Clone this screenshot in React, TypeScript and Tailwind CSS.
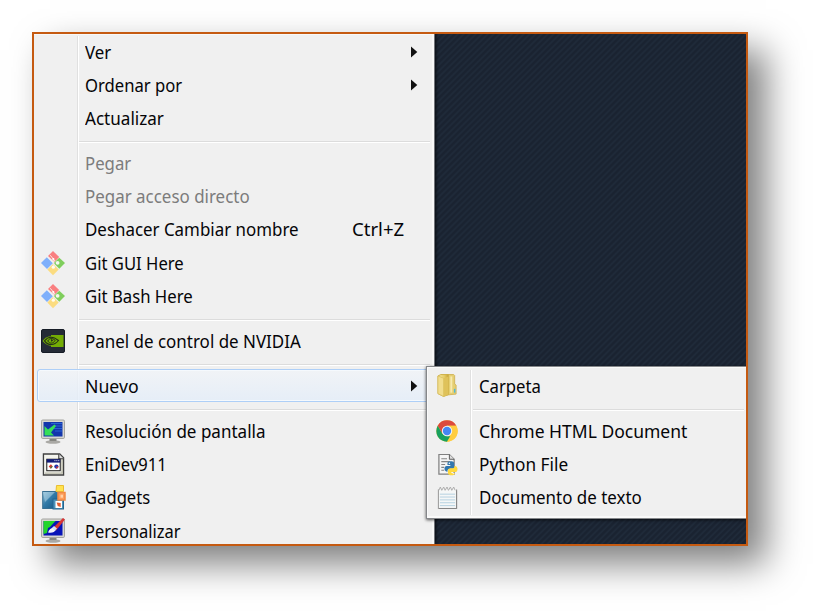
import React, { useLayoutEffect, useRef, useState } from 'react';

function Label({ text, width, dim }: { text: string; width: number; dim?: boolean }) {
  const ref = useRef<HTMLSpanElement>(null);
  const [scale, setScale] = useState(1);
  useLayoutEffect(() => {
    if (ref.current) setScale(width / ref.current.offsetWidth);
  }, [width]);
  return (
    <span
      ref={ref}
      className={`inline-block origin-left whitespace-nowrap ${dim ? 'text-[#7c7c7c]' : 'text-[#050508]'}`}
      style={{ transform: `scaleX(${scale})` }}
    >
      {text}
    </span>
  );
}

function GitIcon() {
  return (
    <svg width="26" height="26" viewBox="0 0 26 26">
      <path d="m8 6 5-5 6.200 6-4.700 5Z" fill="#f97f80" />
      <path d="m6.800 7.300 6 6L7 19 1 13Z" fill="#7fb0fb" />
      <path d="m19.300 7.700 5.700 5.300-5.700 5.700-5.700-5.700Z" fill="#7fce5c" />
      <path d="m13 14 5.700 5.600L13 25.300l-5.700-5.700Z" fill="#fbdc80" />
      <path d="m10.200 5.200 5 6M13.800 10v7" stroke="#f8e6e2" strokeWidth="1" fill="none" />
      <circle cx="17.600" cy="12.800" r="1.900" fill="#f3f7ef" />
      <circle cx="13.300" cy="9" r="1.100" fill="#fff" />
      <circle cx="13.300" cy="17.200" r="1.600" fill="#fffdf0" />
    </svg>
  );
}

function NvidiaIcon() {
  return (
    <svg width="24" height="24" viewBox="0 0 24 24">
      <rect x=".5" y=".5" width="23" height="23" rx="1.500" fill="#252b36" stroke="#161c26" />
      <path d="M10 6h12.500v12H10Z" fill="#74ad05" />
      <path d="M1.500 12C5 6.500 13 5 20 11.500 15 19 6 18 1.500 12Z" fill="#74ad05" />
      <path d="M3.500 11.800c3.500-4.300 8.500-4.700 14-.3-4.500 5.500-10.500 5-14 .3Z" fill="none" stroke="#243017" strokeWidth="1.100" />
      <path d="M6.700 12c1.700-3 4.800-3.200 7.500-.6-2.200 3.500-5.500 3.500-7.500.6Z" fill="none" stroke="#243017" strokeWidth="1" />
      <path d="M10 10v2.700l2.300-1.200Z" fill="#243017" />
    </svg>
  );
}

function ScreenIcon({ brush }: { brush?: boolean }) {
  return (
    <svg width="24" height="25" viewBox="0 0 24 25" className="overflow-visible">
      <ellipse cx="12" cy="23" rx="7.500" ry="1.800" fill="#aaa9a5" />
      <path d="M8.500 19h7v3h-7Z" fill="#858580" />
      <rect x=".5" y="1" width="23" height="18.500" rx="1.300" fill="#d6d6d1" stroke="#a5a5a1" />
      <rect x="2.500" y="3" width="19" height="14.500" fill={brush ? '#0713b8' : '#1336ac'} />
      {brush ? (
        <>
          <path d="M2.500 3h12L9 9l-2 1-1 5-3.500 1Z" fill="#22d52c" />
          <path d="M7 14.500c1-3 3-4.700 6-5.300l2.500 1.500c-2 4-5 4.500-8.500 3.800Z" fill="#f4f4fc" />
          <path d="m12 10 10-10 2 1.500-9 11Z" fill="#d73535" />
          <path d="m11 10 2-2 3 2.500-2 2Z" fill="#d2e1ff" />
        </>
      ) : (
        <>
          <path d="M10 4.500h11M12 7h9M12 9.500h9M14 12h7" stroke="#2963d2" strokeWidth="1" />
          <path d="M3.500 7v9.500H13l-3-3 5-6.500-1.500-1.500L7 10.500Z" fill="#35df58" />
        </>
      )}
    </svg>
  );
}

function AppIcon() {
  return (
    <svg width="23" height="25" viewBox="0 0 24 25">
      <path d="M1.500 1.500h17l4 4v18h-21Z" fill="#f4f4ee" stroke="#404040" strokeWidth="1.400" />
      <path d="M3 21.500h18V6" fill="none" stroke="#b8b8a8" strokeWidth="1.500" />
      <path d="M17.500 1.500v5h5" fill="#dedede" stroke="#444" strokeWidth="1.200" />
      <rect x="5" y="7" width="14" height="12" fill="#fff" stroke="#101010" />
      <path d="M5 7h14v3.500H5Z" fill="#101a78" />
      <path d="M13 8.500h1m1 0h1m1 0h1" stroke="#fff" />
      <path d="m7 14.700 2.300-2.400 2 2.400-2 2.300Z" fill="#db3932" />
      <path d="M9 14.700h2.300L9 17Z" fill="#188c47" />
      <circle cx="15" cy="14.700" r="2.200" fill="#2436ad" />
      <path d="M15 14.700h2.200a2.200 2.200 0 0 1-2.200 2.200Z" fill="#dc3434" />
    </svg>
  );
}

function GadgetsIcon() {
  return (
    <svg width="25" height="25" viewBox="0 0 25 25">
      <defs>
        <linearGradient id="gadget" x1="0" y1="0" x2="1" y2="1">
          <stop stopColor="#9cc6dc" /><stop offset=".45" stopColor="#337ba8" /><stop offset="1" stopColor="#14547f" />
        </linearGradient>
      </defs>
      <rect x="1.700" y="6.500" width="15" height="17" fill="url(#gadget)" stroke="#386f92" />
      <path d="M2 7h12L4 17Z" fill="#b3d6e5" opacity=".55" />
      <rect x="12" y="14" width="10.500" height="10" fill="#4d93ba" stroke="#25658f" />
      <rect x="14.500" y="16" width="6.500" height="7" fill="#fff" />
      <path d="m15.700 17.500 4 .5v4l-3-1Z" fill="#e25d31" />
      <path d="M15.500 .5h7v6h-7.500Z" fill="#ffe34f" stroke="#e9bd31" />
      <rect x="17" y="7.500" width="7" height="7.500" fill="#ff9e5c" stroke="#f18a46" strokeWidth="1.500" />
      <rect x="19.500" y="9.700" width="2.500" height="3" fill="#ffd2a7" />
    </svg>
  );
}

function FolderIcon() {
  return (
    <svg width="21" height="25" viewBox="0 0 22 25">
      <defs>
        <linearGradient id="folder"><stop stopColor="#f5e7a1" /><stop offset=".6" stopColor="#e6cd68" /><stop offset="1" stopColor="#c7a438" /></linearGradient>
      </defs>
      <path d="M10 1h7.500l1 1v9l1.500 1v9.500l-10 1Z" fill="#e5cf72" stroke="#d2b65b" />
      <path d="M1 2.500 4 1h8v21l-5 2-6-3Z" fill="url(#folder)" stroke="#cfb047" />
      <path d="M1 2.500 7 5v19l-6-3Z" fill="#f1dd8d" stroke="#d6bd5b" strokeWidth=".7" />
      <path d="M7 5 12 3v19l-5 2Z" fill="#dfc25a" />
      <path d="M15 3v17" stroke="#f7eab0" strokeWidth="2" />
      <path d="M18.500 16v4" stroke="#4eb8d9" strokeWidth="1.500" />
    </svg>
  );
}

function ChromeIcon() {
  return (
    <svg width="22" height="22" viewBox="0 0 22 22">
      <circle cx="11" cy="11" r="10.700" fill="#ffcd40" />
      <path d="M1.700 5.700A10.700 10.700 0 0 1 20.300 5.700H11L6.400 13.700Z" fill="#dc4a3e" />
      <path d="M1.700 5.700 6.400 13.700 11 16.300h4.600L11 21.700A10.700 10.700 0 0 1 1.700 5.700Z" fill="#18a15f" />
      <path d="m15.600 13.700-4.600 8A10.700 10.700 0 0 0 20.300 5.700H11Z" fill="#ffcd40" />
      <circle cx="11" cy="11" r="5.200" fill="#f5f5f5" />
      <circle cx="11" cy="11" r="4.200" fill="#4587f3" />
    </svg>
  );
}

function PythonIcon() {
  return (
    <svg width="20" height="23" viewBox="0 0 21 24" className="overflow-visible">
      <path d="M2 1.500h11l5 5v15.500H2Z" fill="#f5f5f5" stroke="#808080" strokeWidth="1.300" />
      <path d="M13 1.500v5h5" fill="#ddd" stroke="#555" />
      <path d="M4.500 6h6M4.500 9h9M4.500 12h4M4.500 15h3M4.500 18h3" stroke="#858585" strokeWidth="1.200" />
      <path d="M11 10.500c0-2.500 7-2.500 7 0v4c0 2-1.500 2-4 2s-3 1-3 3c-4 0-4-6-1-6h4v-1h-3Z" fill="#3277ae" />
      <path d="M18.500 13.500c4-.3 4 6.500.5 6.500h-4v.8h4c0 3.200-7.500 3.200-7.500 0v-2.500c0-2 1.500-2.300 4-2.300s3-.7 3-2.500Z" fill="#ffd93e" />
      <circle cx="13" cy="10.700" r=".8" fill="#fff" />
      <circle cx="17" cy="21.500" r=".7" fill="#fff" />
    </svg>
  );
}

function NotepadIcon() {
  return (
    <svg width="21" height="25" viewBox="0 0 22 25">
      <path d="M1.500 3h19v21h-19Z" fill="#f5f7f7" stroke="#a2a2a2" strokeWidth="1.200" />
      <path d="M3 9h16M3 12h16M3 15h16M3 18h16M3 21h16" stroke="#b2d0df" />
      <path d="M0 0h22v4H0Z" fill="#f0f0f0" />
      <path d="m2 5 1.500-3.500L5 5l2-3.500L8.500 5l2-3.500L12 5l2-3.500L15.500 5l2-3.500L19 5" fill="none" stroke="#ababab" strokeWidth="1" />
      <path d="M2 24h18.500V5" stroke="#838383" fill="none" />
    </svg>
  );
}

type Item = {
  text: string;
  width: number;
  icon?: React.ReactNode;
  dim?: boolean;
  arrow?: boolean;
  keys?: string;
  active?: boolean;
};

const groups: Item[][] = [
  [
    { text: 'Ver', width: 26, arrow: true },
    { text: 'Ordenar por', width: 97, arrow: true },
    { text: 'Actualizar', width: 79 },
  ],
  [
    { text: 'Pegar', width: 46, dim: true },
    { text: 'Pegar acceso directo', width: 164.5, dim: true },
    { text: 'Deshacer Cambiar nombre', width: 213.5, keys: 'Ctrl+Z' },
    { text: 'Git GUI Here', width: 99, icon: <GitIcon /> },
    { text: 'Git Bash Here', width: 108, icon: <GitIcon /> },
  ],
  [{ text: 'Panel de control de NVIDIA', width: 216, icon: <NvidiaIcon /> }],
  [{ text: 'Nuevo', width: 53.5, arrow: true, active: true }],
  [
    { text: 'Resolución de pantalla', width: 180, icon: <ScreenIcon /> },
    { text: 'EniDev911', width: 81.5, icon: <AppIcon /> },
    { text: 'Gadgets', width: 65.5, icon: <GadgetsIcon /> },
    { text: 'Personalizar', width: 96, icon: <ScreenIcon brush /> },
  ],
];

const newItems: Item[][] = [
  [{ text: 'Carpeta', width: 62, icon: <FolderIcon /> }],
  [
    { text: 'Chrome HTML Document', width: 208, icon: <ChromeIcon /> },
    { text: 'Python File', width: 89.5, icon: <PythonIcon /> },
    { text: 'Documento de texto', width: 162.5, icon: <NotepadIcon /> },
  ],
];

function Row({ item }: { item: Item }) {
  return (
    <div className="relative flex h-[33.15px] shrink-0 items-center">
      {item.active && (
        <div className="absolute top-0 right-0 left-[3px] h-[33px] rounded-[3px] border border-[#aecff7] bg-linear-to-b from-[#f1f4f8]/80 to-[#e3edf9]/80 shadow-[inset_0_0_0_1px_#f5f9fd]" />
      )}
      <div className="relative flex w-[38px] shrink-0 justify-center">{item.icon}</div>
      <div className="relative ml-[13px] flex-1">
        <Label text={item.text} width={item.width} dim={item.dim} />
      </div>
      {item.keys && (
        <div className="mr-[30px] w-[52px]">
          <Label text={item.keys} width={52} />
        </div>
      )}
      {item.arrow && (
        <svg width="7" height="12" viewBox="0 0 7 12" className="relative mr-[16px]">
          <path d="M0 .5v11L6.300 6Z" fill="#111" />
        </svg>
      )}
    </div>
  );
}

function Separator() {
  return (
    <div className="flex h-[12px] shrink-0 flex-col pt-[6.500px] pr-[4px] pl-[45px]">
      <div className="h-[2px] border-t border-b border-t-[#dcdcdc] border-b-white" />
    </div>
  );
}

function MenuRows({ list }: { list: Item[][] }) {
  return (
    <>
      {list.map((group, i) => (
        <React.Fragment key={i}>
          {i > 0 && <Separator />}
          {group.map((item) => (
            <Row key={item.text} item={item} />
          ))}
        </React.Fragment>
      ))}
    </>
  );
}

export default function App() {
  return (
    <div className="h-[611px] w-[813px] overflow-hidden bg-white pt-[32px] pl-[32px] font-['Noto_Sans','Open_Sans',sans-serif] text-[17.5px] leading-[24px]">
      <div className="h-[514px] w-[716px] border-2 border-[#c55a11] shadow-[18px_18px_34px_rgba(0,0,0,0.5)]">
        <div className="relative flex h-full overflow-hidden bg-[repeating-linear-gradient(135deg,#1a2331_0px,#1a2331_1.5px,#1f2a39_2.5px,#1f2a39_3.5px,#1a2331_4.24px)]">
          <div className="relative flex h-full w-[401px] shrink-0 flex-col border-r border-[#71747a] bg-[#f0f0f0] pt-[1.200px] shadow-[inset_-2px_1px_0_#f8f8f8,1px_0_3px_#000b]">
            <div className="absolute top-[2px] bottom-0 left-[43px] w-[2px] border-r border-l border-r-white border-l-[#e0e0e0]" />
            <MenuRows list={groups} />
          </div>
          <div className="absolute top-[332px] left-[392px] flex h-[153px] w-[322px] flex-col border-t border-b border-l border-[#85878a] bg-[#f0f0f0] pt-[2.200px] pl-[1px] shadow-[inset_1px_1px_0_#fafafa,inset_-1px_-2px_0_#fafafa,0_1px_3px_#000a]">
            <div className="absolute top-[3px] bottom-[3px] left-[43px] w-[2px] border-r border-l border-r-white border-l-[#e0e0e0]" />
            <MenuRows list={newItems} />
          </div>
        </div>
      </div>
    </div>
  );
}
